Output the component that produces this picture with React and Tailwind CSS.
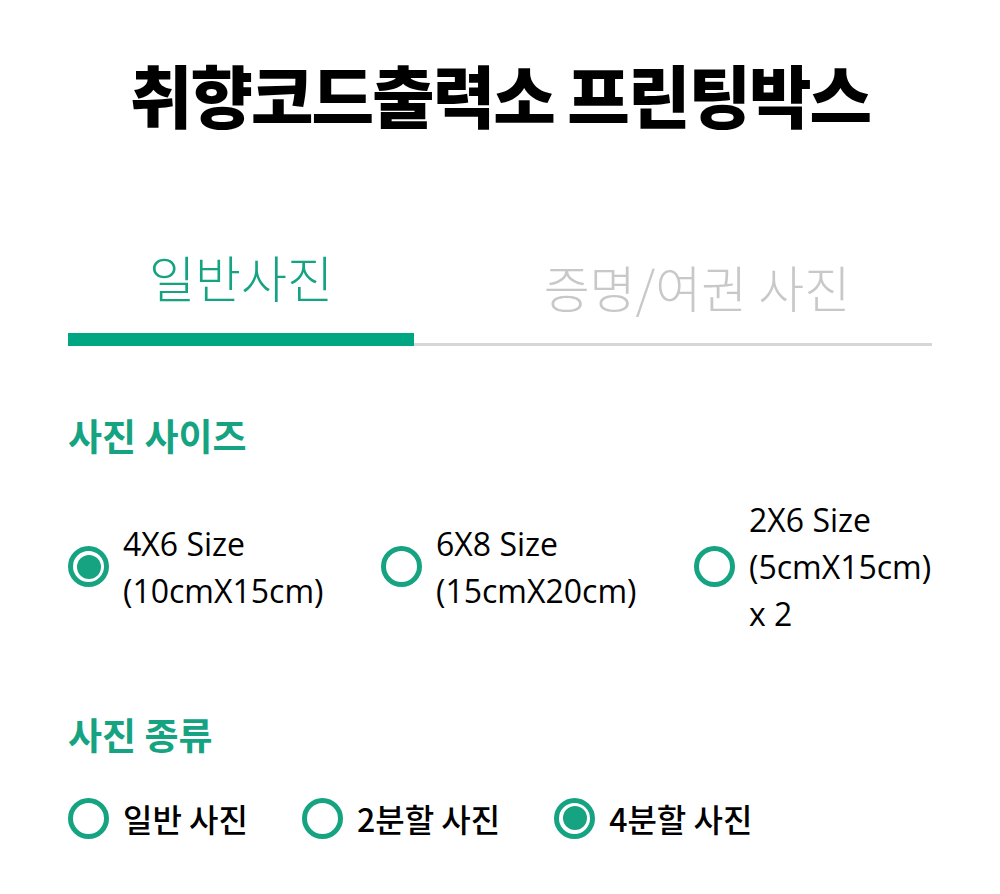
import { useState } from "react";

const sizes = [
	{ id: "4x6", lines: ["4X6 Size", "(10cmX15cm)"] },
	{ id: "6x8", lines: ["6X8 Size", "(15cmX20cm)"] },
	{ id: "2x6", lines: ["2X6 Size", "(5cmX15cm)", "x 2"] },
];

const kinds = [
	{ id: "normal", label: "일반 사진" },
	{ id: "half", label: "2분할 사진" },
	{ id: "quarter", label: "4분할 사진" },
];

function Radio({ checked }) {
	return (
		<span className="flex h-[41px] w-[41px] shrink-0 items-center justify-center rounded-full border-[5px] border-[#15a382]">
			{checked && <span className="h-[24px] w-[24px] rounded-full bg-[#15a382]" />}
		</span>
	);
}

function App() {
	const [tab, setTab] = useState(0);
	const [size, setSize] = useState("4x6");
	const [kind, setKind] = useState("quarter");

	const tabClass = (i) =>
		tab === i
			? "border-b-[13px] border-[#00a582] text-[#15a382]"
			: "border-b-[3px] border-[#d6d6d6] text-[#c8c8c8]";

	return (
		<div className="min-h-screen bg-white font-['Noto_Sans_CJK_KR','Open_Sans',sans-serif] text-black">
			<div className="mx-auto w-[864px] pt-[48px]">
				<h1 className="text-center text-[68px] font-black leading-[92px] tracking-[-2px]">
					취향코드출력소 프린팅박스
				</h1>

				<div className="mt-[104px] flex items-end">
					<button
						onClick={() => setTab(0)}
						className={`w-[346px] pb-[25px] text-[50px] font-light leading-[64px] ${tabClass(0)}`}
					>
						일반사진
					</button>
					<button
						onClick={() => setTab(1)}
						className={`flex-1 pb-[25px] pl-[48px] text-[50px] font-light leading-[64px] ${tabClass(1)}`}
					>
						증명/여권 사진
					</button>
				</div>

				<h2 className="mt-[64px] text-[37px] font-bold leading-[50px] text-[#15a382]">사진 사이즈</h2>

				<div className="mt-[36px] flex">
					{sizes.map((s) => (
						<button
							key={s.id}
							onClick={() => setSize(s.id)}
							className="flex w-[313px] shrink-0 items-center gap-[14px] text-left"
						>
							<Radio checked={size === s.id} />
							<span className="flex flex-col whitespace-nowrap font-['Open_Sans','Noto_Sans_CJK_KR',sans-serif] text-[32px] leading-[47px]">
								{s.lines.map((l) => (
									<span key={l}>{l}</span>
								))}
							</span>
						</button>
					))}
				</div>

				<h2 className="mt-[72px] text-[37px] font-bold leading-[50px] text-[#15a382]">사진 종류</h2>

				<div className="mt-[36px] flex gap-[54px]">
					{kinds.map((k) => (
						<button key={k.id} onClick={() => setKind(k.id)} className="flex items-center gap-[14px]">
							<Radio checked={kind === k.id} />
							<span className="text-[32px] font-medium leading-[46px]">{k.label}</span>
						</button>
					))}
				</div>
			</div>
		</div>
	);
}

export default App;
